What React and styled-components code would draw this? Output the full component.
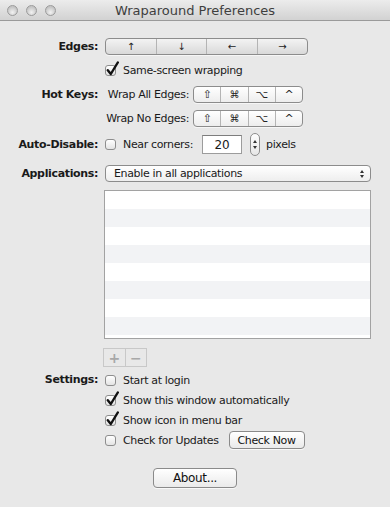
import React from 'react'
import styled, { createGlobalStyle } from 'styled-components'

const GlobalStyle = createGlobalStyle`
  html, body { margin: 0; padding: 0; background: #e8e8e8; }
  body { font-family: "DejaVu Sans", "Liberation Sans", sans-serif; font-size: 11px; letter-spacing: -0.35px; color: #1a1a1a; }
`

const Window = styled.div`
  width: 390px;
  height: 507px;
  background: #e8e8e8;
  display: flex;
  flex-direction: column;
  overflow: hidden;
`

const TitleBar = styled.div`
  height: 20px;
  flex: none;
  border-bottom: 1px solid #9a9a9a;
  background: linear-gradient(#ececec, #d2d2d2);
  display: flex;
  align-items: center;
  position: relative;
`

const Lights = styled.div`
  display: flex;
  gap: 8px;
  padding-left: 7px;
`

const Light = styled.span`
  width: 11px;
  height: 11px;
  border-radius: 50%;
  border: 1px solid #9b9b9b;
  background: radial-gradient(circle at 50% 70%, #f2f2f2, #c4c4c4 70%);
  box-sizing: border-box;
`

const Title = styled.div`
  position: absolute;
  left: 0;
  right: 0;
  text-align: center;
  font-size: 13px;
  letter-spacing: 0;
  color: #3e3e3e;
  pointer-events: none;
`

const Content = styled.div`
  padding-top: 17px;
  display: flex;
  flex-direction: column;
`

const Row = styled.div`
  display: flex;
  align-items: ${p => (p.top ? 'flex-start' : 'center')};
  height: ${p => p.h || 17}px;
  margin-top: ${p => p.mt || 0}px;
`

const Label = styled.div`
  width: 98px;
  flex: none;
  text-align: right;
  font-weight: bold;
  padding-right: 7px;
  line-height: ${p => p.lh || 'normal'};
`

const Cell = styled.div`
  display: flex;
  align-items: center;
  gap: ${p => p.gap || 0}px;
`

const SubLabel = styled.div`
  width: 84px;
  margin-right: 4px;
  text-align: right;
  white-space: nowrap;
`

const Segmented = styled.div`
  display: flex;
  width: ${p => p.w}px;
  height: 17px;
  box-sizing: border-box;
  border: 1px solid #8c8c8c;
  border-radius: 4px;
  background: ${p => (p.grey ? 'linear-gradient(#f3f3f3, #d9d9d9)' : 'linear-gradient(#ffffff, #ededed)')};
  box-shadow: 0 1px 0 rgba(255, 255, 255, 0.6);
  overflow: hidden;
`

const Segment = styled.div`
  flex: 1;
  display: flex;
  align-items: center;
  justify-content: center;
  font-size: ${p => p.fs || 11}px;
  color: #222;
  & + & { border-left: 1px solid #b4b4b4; }
`

const CheckBox = styled.span`
  position: relative;
  width: 11px;
  height: 11px;
  flex: none;
  box-sizing: border-box;
  border: 1px solid #8e8e8e;
  border-radius: 3px;
  background: linear-gradient(#ffffff, #e4e4e4);
  svg {
    position: absolute;
    left: 0px;
    top: -5px;
  }
`

const Check = ({ on }) => (
  <CheckBox>
    {on && (
      <svg width="13" height="15" viewBox="0 0 13 15">
        <path d="M1.8 9.2 L4.8 13 L11.8 1.5" fill="none" stroke="#111" strokeWidth="2.4" strokeLinecap="round" strokeLinejoin="round" />
      </svg>
    )}
  </CheckBox>
)

const CheckRow = styled.label`
  display: flex;
  align-items: center;
  gap: 7px;
  white-space: nowrap;
`

const TextField = styled.div`
  width: 40px;
  height: 19px;
  box-sizing: border-box;
  border: 1px solid #9c9c9c;
  border-top-color: #7d7d7d;
  background: #fff;
  display: flex;
  align-items: center;
  justify-content: center;
  font-size: 12px;
  letter-spacing: 0;
  margin-left: 3px;
`

const Stepper = styled.div`
  width: 10px;
  height: 23px;
  box-sizing: border-box;
  border: 1px solid #8e8e8e;
  border-radius: 5px;
  background: linear-gradient(#fefefe, #e6e6e6);
  display: flex;
  flex-direction: column;
  align-items: center;
  justify-content: center;
  gap: 3px;
  margin-left: 2px;
  margin-right: 0px;
`

const Tri = styled.span`
  width: 0;
  height: 0;
  border-left: 2.5px solid transparent;
  border-right: 2.5px solid transparent;
  ${p => (p.down ? 'border-top: 3px solid #333;' : 'border-bottom: 3px solid #333;')}
`

const Popup = styled.div`
  width: 266px;
  height: 17px;
  box-sizing: border-box;
  border: 1px solid #8c8c8c;
  border-radius: 4px;
  background: linear-gradient(#ffffff, #eeeeee);
  display: flex;
  align-items: center;
  justify-content: space-between;
  padding: 0 6px 0 8px;
`

const PopArrows = styled.div`
  display: flex;
  flex-direction: column;
  gap: 2px;
`

const Table = styled.div`
  width: 267px;
  height: 149px;
  box-sizing: border-box;
  border: 1px solid #a2a2a2;
  margin-left: 104px;
  background: #fff;
  overflow: hidden;
`

const TableRow = styled.div`
  height: 18px;
  background: ${p => (p.alt ? '#f2f3f5' : '#ffffff')};
`

const AddRemove = styled.div`
  display: flex;
  margin-left: 103px;
  width: 44px;
  height: 19px;
  box-sizing: border-box;
  border: 1px solid #c8c8c8;
  background: #e8e8e8;
`

const SmallBtn = styled.div`
  flex: 1;
  display: flex;
  align-items: center;
  justify-content: center;
  color: #a8a8a8;
  font-size: 14px;
  font-weight: bold;
  & + & { border-left: 1px solid #c8c8c8; }
`

const SettingsList = styled.div`
  display: flex;
  flex-direction: column;
`

const PushButton = styled.div`
  height: ${p => p.h || 18}px;
  width: ${p => p.w}px;
  margin-left: ${p => p.ml || 0}px;
  box-sizing: border-box;
  border: 1px solid #8a8a8a;
  border-radius: 4px;
  background: linear-gradient(#ffffff, #eaeaea);
  display: flex;
  align-items: center;
  justify-content: center;
  font-size: ${p => p.fs || 11}px;
  color: #111;
  box-shadow: 0 1px 0 rgba(255, 255, 255, 0.7);
`

const Centered = styled.div`
  display: flex;
  justify-content: center;
  margin-top: ${p => p.mt || 0}px;
`

export default function App() {
  const rows = Array.from({ length: 9 }, (_, i) => i)
  return (
    <>
      <GlobalStyle />
      <Window>
        <TitleBar>
          <Lights>
            <Light />
            <Light />
            <Light />
          </Lights>
          <Title>Wraparound Preferences</Title>
        </TitleBar>
        <Content>
          <Row>
            <Label>Edges:</Label>
            <Segmented w={203} grey>
              <Segment fs={10}>↑</Segment>
              <Segment fs={10}>↓</Segment>
              <Segment fs={10}>←</Segment>
              <Segment fs={10}>→</Segment>
            </Segmented>
          </Row>
          <Row h={16} mt={7}>
            <Label />
            <CheckRow>
              <Check on />
              Same-screen wrapping
            </CheckRow>
          </Row>
          <Row mt={8}>
            <Label>Hot Keys:</Label>
            <Cell>
              <SubLabel>Wrap All Edges:</SubLabel>
              <Segmented w={110}>
                <Segment>⇧</Segment>
                <Segment fs={10}>⌘</Segment>
                <Segment>⌥</Segment>
                <Segment>^</Segment>
              </Segmented>
            </Cell>
          </Row>
          <Row mt={7}>
            <Label />
            <Cell>
              <SubLabel>Wrap No Edges:</SubLabel>
              <Segmented w={110}>
                <Segment>⇧</Segment>
                <Segment fs={10}>⌘</Segment>
                <Segment>⌥</Segment>
                <Segment>^</Segment>
              </Segmented>
            </Cell>
          </Row>
          <Row h={23} mt={6}>
            <Label>Auto-Disable:</Label>
            <Cell gap={6}>
              <CheckRow>
                <Check />
                Near corners:
              </CheckRow>
              <TextField>20</TextField>
              <Stepper>
                <Tri />
                <Tri down />
              </Stepper>
              pixels
            </Cell>
          </Row>
          <Row mt={9}>
            <Label>Applications:</Label>
            <Popup>
              <span>Enable in all applications</span>
              <PopArrows>
                <Tri />
                <Tri down />
              </PopArrows>
            </Popup>
          </Row>
          <Row h={149} mt={8}>
            <Table>
              {rows.map(i => (
                <TableRow key={i} alt={i % 2 === 1} />
              ))}
            </Table>
          </Row>
          <Row h={19} mt={9}>
            <AddRemove>
              <SmallBtn>+</SmallBtn>
              <SmallBtn>−</SmallBtn>
            </AddRemove>
          </Row>
          <Row h={80} mt={3} top>
            <Label lh="20px">Settings:</Label>
            <SettingsList>
              <Row h={20}>
                <CheckRow>
                  <Check />
                  Start at login
                </CheckRow>
              </Row>
              <Row h={20}>
                <CheckRow>
                  <Check on />
                  Show this window automatically
                </CheckRow>
              </Row>
              <Row h={20}>
                <CheckRow>
                  <Check on />
                  Show icon in menu bar
                </CheckRow>
              </Row>
              <Row h={20}>
                <CheckRow>
                  <Check />
                  Check for Updates
                </CheckRow>
                <PushButton w={76} ml={10}>Check Now</PushButton>
              </Row>
            </SettingsList>
          </Row>
          <Centered mt={18}>
            <PushButton w={84} h={20} fs={12}>About...</PushButton>
          </Centered>
        </Content>
      </Window>
    </>
  )
}
